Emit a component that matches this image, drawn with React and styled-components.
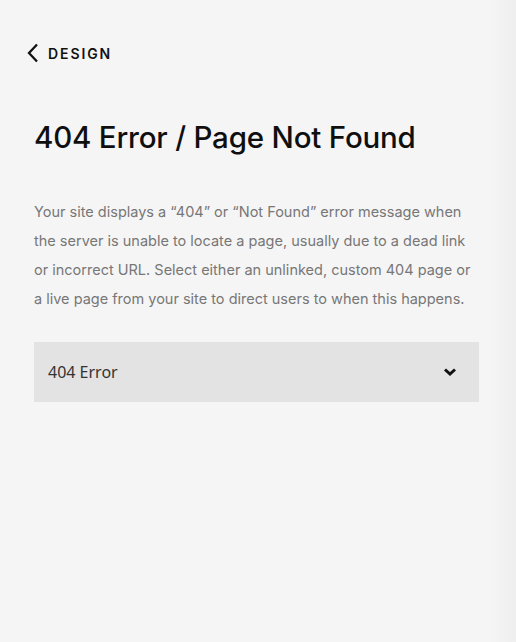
import React from "react";
import styled, { createGlobalStyle } from "styled-components";

const Global = createGlobalStyle`
  html, body { margin: 0; padding: 0; }
  body {
    background: #f5f5f5;
    font-family: Inter, "Liberation Sans", sans-serif;
    -webkit-font-smoothing: antialiased;
  }
`;

const Panel = styled.div`
  position: relative;
  width: 516px;
  height: 642px;
  box-sizing: border-box;
  background: linear-gradient(to right, #f5f5f5 0, #f5f5f5 488px, #efefef 516px);
  padding: 43px 37px 0 34px;
  display: flex;
  flex-direction: column;
`;

const BackLink = styled.a`
  display: flex;
  align-items: center;
  gap: 9px;
  margin-left: -8px;
  color: #111;
  font-size: 14px;
  font-weight: 600;
  letter-spacing: 1.9px;
  text-transform: uppercase;
  text-decoration: none;
  height: 20px;
`;

const Title = styled.h1`
  margin: 56px 0 0;
  font-size: 29.5px;
  font-weight: 500;
  color: #0f0f0f;
  letter-spacing: -0.2px;
  line-height: 36px;
`;

const Description = styled.p`
  margin: 42px 0 0;
  font-size: 14.5px;
  line-height: 29px;
  color: #777;
  letter-spacing: 0;
`;

const Select = styled.button`
  margin-top: 29px;
  width: 445px;
  height: 60px;
  box-sizing: border-box;
  background: #e3e3e3;
  border: none;
  padding: 0 22px 0 14px;
  display: flex;
  align-items: center;
  justify-content: space-between;
  font-family: "Noto Sans", "Open Sans", sans-serif;
  font-size: 16px;
  color: #333;
  cursor: pointer;
`;

const Chevron = ({ dir }) =>
  dir === "left" ? (
    <svg width="13" height="20" viewBox="0 0 13 20">
      <path d="M11 1.5 L3 10 L11 18.5" fill="none" stroke="#111" strokeWidth="2.3" />
    </svg>
  ) : (
    <svg width="14" height="10" viewBox="0 0 14 10">
      <path d="M2 2.5 L7 7 L12 2.5" fill="none" stroke="#111" strokeWidth="3" />
    </svg>
  );

export default function App() {
  return (
    <>
      <Global />
      <Panel>
        <BackLink href="#">
          <Chevron dir="left" />
          Design
        </BackLink>
        <Title>404 Error / Page Not Found</Title>
        <Description>
          Your site displays a “404” or “Not Found” error message when the server is unable to
          locate a page, usually due to a dead link or incorrect URL. Select either an unlinked,
          custom 404 page or a live page from your site to direct users to when this happens.
        </Description>
        <Select>
          <span>404 Error</span>
          <Chevron dir="down" />
        </Select>
      </Panel>
    </>
  );
}
